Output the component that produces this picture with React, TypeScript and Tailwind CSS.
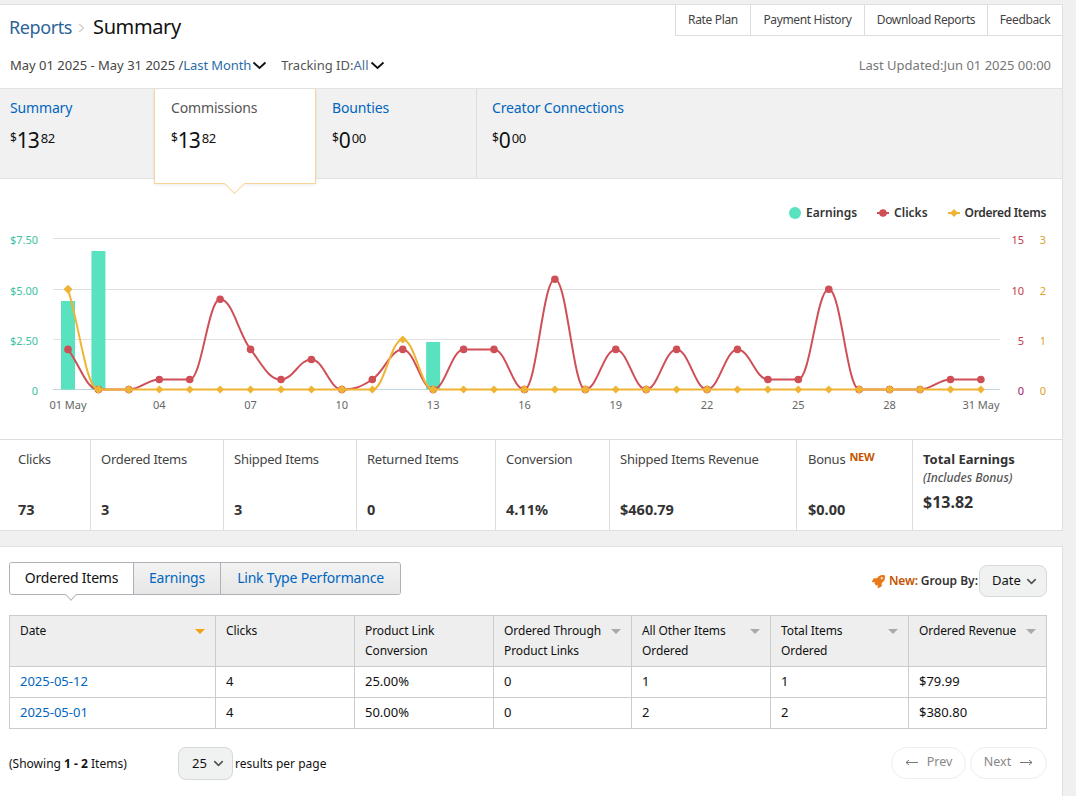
import { ChevronDown } from "lucide-react";
import { FaRocket } from "react-icons/fa";

const clicks = [4, 0, 0, 1, 1, 9, 4, 1, 3, 0, 1, 4, 0, 4, 4, 0, 11, 0, 4, 0, 4, 0, 4, 1, 1, 10, 0, 0, 0, 1, 1];
const ordered = clicks.map((_, i) => (i === 0 ? 2 : i === 11 ? 1 : 0));
const earnings = [
  { day: 0, top: 301 },
  { day: 1, top: 251 },
  { day: 12, top: 342 },
];

const X0 = 68;
const STEP = 30.43;
const BASE = 389.5;
const xAt = (i: number) => X0 + i * STEP;

// highcharts spline: control arms shifted onto the neighbours' slope, then clamped
function spline(pts: number[][]) {
  const cont = (i: number) => {
    const [x, y] = pts[i];
    const [lastX, lastY] = pts[i - 1] || pts[i];
    const [nextX, nextY] = pts[i + 1] || pts[i];
    const lcx = (1.5 * x + lastX) / 2.5;
    let lcy = (1.5 * y + lastY) / 2.5;
    const rcx = (1.5 * x + nextX) / 2.5;
    let rcy = (1.5 * y + nextY) / 2.5;
    if (pts[i - 1] && pts[i + 1]) {
      const correction = ((rcy - lcy) * (rcx - x)) / (rcx - lcx);
      rcy = y + correction;
      lcy = y - correction;
      if (lcy > lastY && lcy > y) {
        lcy = Math.max(lastY, y);
        rcy = 2 * y - lcy;
      } else if (lcy < lastY && lcy < y) {
        lcy = Math.min(lastY, y);
        rcy = 2 * y - lcy;
      }
      if (rcy > nextY && rcy > y) {
        rcy = Math.max(nextY, y);
        lcy = 2 * y - rcy;
      } else if (rcy < nextY && rcy < y) {
        rcy = Math.min(nextY, y);
        lcy = 2 * y - rcy;
      }
    }
    return { lcx, lcy, rcx, rcy };
  };
  let d = `M${pts[0][0]} ${pts[0][1]}`;
  for (let i = 1; i < pts.length; i++) {
    const a = cont(i - 1);
    const b = cont(i);
    d += ` C${a.rcx} ${a.rcy} ${b.lcx} ${b.lcy} ${pts[i][0]} ${pts[i][1]}`;
  }
  return d;
}

const clickPts = clicks.map((v, i) => [xAt(i), BASE - v * 10.02]);
const orderedPts = ordered.map((v, i) => [xAt(i), BASE - v * 50.1]);

function Diamond({ cx, cy, r = 4.5 }: { cx: number; cy: number; r?: number }) {
  return <path d={`M${cx} ${cy - r}L${cx + r} ${cy}L${cx} ${cy + r}L${cx - r} ${cy}Z`} fill="#f0b434" />;
}

function Chart() {
  const axis = [
    { y: 238.5, a: "$7.50", b: "15", c: "3" },
    { y: 289.5, a: "$5.00", b: "10", c: "2" },
    { y: 339.5, a: "$2.50", b: "5", c: "1" },
    { y: 389.5, a: "0", b: "0", c: "0" },
  ];
  return (
    <svg width="1062" height="214" viewBox="0 225 1062 214" className="block" fontSize="11">
      {axis.map((t, i) => (
        <g key={t.y}>
          <line x1="53" x2="1000" y1={t.y} y2={t.y} stroke={i === 3 ? "#c0d4e4" : "#e0e0e0"} strokeWidth="1" />
          <text x="38" y={t.y + 5} textAnchor="end" fill="#3cc4a4">{t.a}</text>
          <text x="1024" y={t.y + 5} textAnchor="end" fill={i === 3 ? "#a0206a" : "#c23c48"}>{t.b}</text>
          <text x="1046" y={t.y + 5} textAnchor="end" fill="#e0a030">{t.c}</text>
        </g>
      ))}
      {earnings.map((b) => (
        <rect key={b.day} x={xAt(b.day) - 7} y={b.top} width="14" height={BASE - b.top} fill="#58e2c0" />
      ))}
      <path d={spline(clickPts)} fill="none" stroke="#cf4f57" strokeWidth="2" />
      {clickPts.map(([x, y], i) => (
        <circle key={i} cx={x} cy={y} r="3.8" fill="#cf4f57" />
      ))}
      <path d={spline(orderedPts)} fill="none" stroke="#f0b434" strokeWidth="2" />
      {orderedPts.map(([x, y], i) => (
        <Diamond key={i} cx={x} cy={y} r={clicks[i] === 0 || i === 0 ? 4.5 : 4} />
      ))}
      <g fill="#666666">
        <text x="68" y="409" textAnchor="middle">01 May</text>
        {["04", "07", "10", "13", "16", "19", "22", "25", "28"].map((l, i) => (
          <text key={l} x={xAt(3 + i * 3)} y="409" textAnchor="middle">{l}</text>
        ))}
        <text x="981" y="409" textAnchor="middle">31 May</text>
      </g>
    </svg>
  );
}

function Money({ whole, cents }: { whole: string; cents: string }) {
  return (
    <div className="mt-[7px] flex items-start text-[#111]">
      <span className="mt-[6px] text-[12px] leading-[14px]">$</span>
      <span className="text-[21px] leading-[30px] tracking-[-1px]">{whole}</span>
      <span className="mt-[6px] ml-[2px] text-[13px] leading-[14px] tracking-[-0.5px]">{cents}</span>
    </div>
  );
}

const stats = [
  { w: "w-[91px]", pl: "pl-[18px]", label: "Clicks", value: "73" },
  { w: "w-[133px]", pl: "pl-[10px]", label: "Ordered Items", value: "3" },
  { w: "w-[133px]", pl: "pl-[10px]", label: "Shipped Items", value: "3" },
  { w: "w-[139px]", pl: "pl-[10px]", label: "Returned Items", value: "0" },
  { w: "w-[114px]", pl: "pl-[10px]", label: "Conversion", value: "4.11%" },
  { w: "w-[187px]", pl: "pl-[10px]", label: "Shipped Items Revenue", value: "$460.79" },
  { w: "w-[116px]", pl: "pl-[11px]", label: "Bonus", value: "$0.00", isNew: true },
];

const columns = [
  { w: "w-[206px]", lines: ["Date"], sort: "active" },
  { w: "w-[139px]", lines: ["Clicks"] },
  { w: "w-[139px]", lines: ["Product Link", "Conversion"] },
  { w: "w-[138px]", lines: ["Ordered Through", "Product Links"], sort: "idle" },
  { w: "w-[139px]", lines: ["All Other Items", "Ordered"], sort: "idle" },
  { w: "w-[138px]", lines: ["Total Items", "Ordered"], sort: "idle" },
  { w: "w-[138px]", lines: ["Ordered Revenue"], sort: "idle" },
];

const rows = [
  ["2025-05-12", "4", "25.00%", "0", "1", "1", "$79.99"],
  ["2025-05-01", "4", "50.00%", "0", "2", "2", "$380.80"],
];

export default function App() {
  return (
    <div className="h-[796px] w-[1076px] overflow-hidden bg-[#f0f0f0] pt-[4px] font-['Noto_Sans',sans-serif] text-[#333]">
      <div className="w-[1063px] border-t border-r border-b border-[#e0e0e0] bg-white">
        {/* header */}
        <div className="relative h-[83px]">
          <div className="flex items-center pl-[9px] pt-[7px] leading-[30px]">
            <span className="text-[18px] tracking-[-0.4px] text-[#2a6496]">Reports</span>
            <ChevronRightThin />
            <span className="text-[20px] tracking-[-0.4px] text-[#111]">Summary</span>
          </div>
          <div className="absolute top-0 right-0 flex h-[31px] border-b border-l border-[#dddddd] text-[12px] leading-[30px] tracking-[-0.35px] text-[#444]">
            <span className="w-[75px] border-r border-[#dddddd] text-center">Rate Plan</span>
            <span className="w-[114px] border-r border-[#dddddd] text-center">Payment History</span>
            <span className="w-[123px] border-r border-[#dddddd] text-center">Download Reports</span>
            <span className="w-[74px] text-center">Feedback</span>
          </div>
          <div className="mt-[13px] flex items-center justify-between pr-[11px] pl-[10px] text-[13px] leading-[20px]">
            <div className="flex items-center">
              <span className="text-[#444]">May 01 2025 - May 31 2025 /</span>
              <span className="tracking-[-0.1px] text-[#2a6da8]">Last Month</span>
              <DateChevron />
              <span className="ml-[14px] text-[#555]">Tracking ID:</span>
              <span className="text-[#4a6f96]">All</span>
              <DateChevron />
            </div>
            <span className="text-[#777]">Last Updated:Jun 01 2025 00:00</span>
          </div>
        </div>

        {/* tabs */}
        <div className="flex h-[91px] items-start border-t border-b border-[#e3e3e3] bg-[#f1f1f1] text-[14px] leading-[20px] tracking-[-0.15px]">
          <div className="h-[89px] w-[154px] pt-[9px] pl-[10px]">
            <span className="text-[#0066c0]">Summary</span>
            <Money whole="13" cents="82" />
          </div>
          <div className="relative z-10 h-[95px] w-[162px] border-x border-b border-[#f8d596] bg-white pt-[9px] pl-[16px] shadow-[0_1px_3px_rgba(0,0,0,0.08)]">
            <span className="text-[#555]">Commissions</span>
            <Money whole="13" cents="82" />
            <div className="absolute -bottom-[8px] left-[72px] size-[15px] rotate-45 border-r border-b border-[#f8d596] bg-white" />
          </div>
          <div className="h-[89px] w-[161px] border-r border-[#dddddd] pt-[9px] pl-[16px]">
            <span className="text-[#0066c0]">Bounties</span>
            <Money whole="0" cents="00" />
          </div>
          <div className="h-[89px] flex-1 pt-[9px] pl-[15px]">
            <span className="text-[#0066c0]">Creator Connections</span>
            <Money whole="0" cents="00" />
          </div>
        </div>

        {/* legend + chart */}
        <div className="flex h-[46px] items-end justify-end pr-[16px] pb-[3px] text-[12px] leading-[18px] font-semibold text-[#333]">
          <div className="mr-[20px] flex items-center gap-[5px]">
            <span className="size-[12px] rounded-full bg-[#58e2c0]" />
            Earnings
          </div>
          <div className="mr-[20px] flex items-center gap-[5px]">
            <LegendMark color="#cf4f57" round />
            Clicks
          </div>
          <div className="flex items-center gap-[5px] tracking-[-0.3px]">
            <LegendMark color="#f0b434" />
            Ordered Items
          </div>
        </div>
        <Chart />

        {/* totals */}
        <div className="flex h-[91px] border-t border-[#dddddd] text-[13px] leading-[20px]">
          {stats.map((s) => (
            <div key={s.label} className={`${s.w} ${s.pl} flex flex-col border-r border-[#dddddd] pt-[9px]`}>
              <div className="tracking-[-0.25px] text-[#444]">
                {s.label}
                {s.isNew && <sup className="relative -top-[1px] ml-[4px] align-[2px] text-[11px] font-bold text-[#c45500]">NEW</sup>}
              </div>
              <div className="mt-[30px] text-[14.5px] font-bold text-[#333]">{s.value}</div>
            </div>
          ))}
          <div className="flex-1 pt-[9px] pl-[10px]">
            <div className="font-bold text-[#333]">Total Earnings</div>
            <div className="text-[12px] leading-[18px] font-medium text-[#555] italic">(Includes Bonus)</div>
            <div className="mt-[5px] text-[16px] font-bold text-[#333]">$13.82</div>
          </div>
        </div>
      </div>

      <div className="mt-[15px] h-[260px] w-[1063px] border-t border-r border-[#e0e0e0] bg-white pr-[15px] pl-[9px]">
        <div className="flex items-start justify-between pt-[15px]">
          <div className="flex h-[33px] rounded-[3px] border border-[#adb1b8] text-[14px] leading-[30px] tracking-[-0.2px]">
            <div className="relative w-[123px] rounded-l-[3px] bg-white text-center text-[#111]">
              Ordered Items
              <div className="absolute -bottom-[5px] left-[57px] size-[8px] rotate-45 border-r border-b border-[#bbbbbb] bg-white" />
            </div>
            <div className="w-[87px] border-l border-[#adb1b8] bg-gradient-to-b from-[#f3f3f3] to-[#e6e6e6] text-center text-[#0066c0]">Earnings</div>
            <div className="w-[180px] rounded-r-[3px] border-l border-[#adb1b8] bg-gradient-to-b from-[#f3f3f3] to-[#e6e6e6] text-center text-[#0066c0]">Link Type Performance</div>
          </div>
          <div className="mt-[3px] flex items-center text-[12px] font-semibold">
            <FaRocket size={13} className="mr-[4px] text-[#e8791a]" />
            <span className="mr-[3px] tracking-[-0.2px] text-[#c45500]">New:</span>
            <span className="text-[#333]">Group By:</span>
            <div className="ml-[1px] flex h-[32px] w-[68px] items-center justify-between rounded-[8px] border border-[#d5d9d9] bg-[#f0f2f2] pr-[7px] pl-[12px] text-[13px] font-normal text-[#111]">
              Date
              <ChevronDown size={15} strokeWidth={2.6} className="text-[#555]" />
            </div>
          </div>
        </div>

        <table className="mt-[18px] w-[1037px] table-fixed border-collapse text-[13px] text-[#111]">
          <thead>
            <tr className="h-[51px] bg-[#eeeeee]">
              {columns.map((c) => (
                <th key={c.lines[0]} className={`${c.w} border border-[#cccccc] px-[10px] pt-[5px] pb-[5px] align-top text-left text-[12px] leading-[20px] font-normal tracking-[-0.1px]`}>
                  <div className="relative">
                    {c.lines.map((l) => (
                      <div key={l} className="whitespace-nowrap">{l}</div>
                    ))}
                    {c.sort && (
                      <span
                        className={`absolute top-[8px] right-0 size-0 border-x-[5px] border-t-[5px] border-x-transparent ${
                          c.sort === "active" ? "border-t-[#f0a010]" : "border-t-[#aaaaaa]"
                        }`}
                      />
                    )}
                  </div>
                </th>
              ))}
            </tr>
          </thead>
          <tbody>
            {rows.map((r) => (
              <tr key={r[0]} className="h-[31px]">
                {r.map((v, i) => (
                  <td key={i} className={`border border-[#cccccc] px-[10px] pb-[2px] leading-[20px] ${i === 0 ? "text-[#0066c0]" : ""}`}>
                    {v}
                  </td>
                ))}
              </tr>
            ))}
          </tbody>
        </table>

        <div className="mt-[18px] flex items-center justify-between text-[12px] text-[#111]">
          <div className="flex items-center">
            <span className="w-[169px]">
              (Showing <b>1 - 2</b> Items)
            </span>
            <div className="flex h-[33px] w-[55px] items-center justify-between rounded-[8px] border border-[#d5d9d9] bg-[#f0f2f2] pr-[6px] pl-[13px] text-[13px]">
              25
              <ChevronDown size={15} strokeWidth={2.6} className="text-[#555]" />
            </div>
            <span className="ml-[2px]">results per page</span>
          </div>
          <div className="flex -translate-y-[1px] gap-[4px] text-[12.5px] text-[#888]">
            <div className="flex h-[32px] w-[75px] items-center justify-center gap-[9px] rounded-full border border-[#eeeeee]">
              <PageArrow left />
              Prev
            </div>
            <div className="flex h-[32px] w-[77px] items-center justify-center gap-[9px] rounded-full border border-[#eeeeee]">
              Next
              <PageArrow />
            </div>
          </div>
        </div>
      </div>
    </div>
  );
}

function ChevronRightThin() {
  return (
    <svg width="7" height="10" viewBox="0 0 7 10" className="mr-[8px] ml-[6px] mt-[2px]">
      <path d="M1 1l4.5 4L1 9" fill="none" stroke="#cccccc" strokeWidth="1.2" />
    </svg>
  );
}

function DateChevron() {
  return (
    <svg width="15" height="9" viewBox="0 0 15 9" className="mt-[1px] ml-[1px]">
      <path d="M1.5 1.5l6 5.5 6-5.5" fill="none" stroke="#111111" strokeWidth="1.8" />
    </svg>
  );
}

function PageArrow({ left }: { left?: boolean }) {
  return (
    <svg width="13" height="7" viewBox="0 0 13 7">
      <path d={left ? "M13 3.5H1M4 1L1 3.5 4 6" : "M0 3.5h12M9 1l3 2.5L9 6"} fill="none" stroke="#777777" strokeWidth="1" />
    </svg>
  );
}

function LegendMark({ color, round }: { color: string; round?: boolean }) {
  return (
    <svg width="12" height="10" viewBox="0 0 12 10">
      <line x1="0" x2="12" y1="5" y2="5" stroke={color} strokeWidth="2" />
      {round ? <circle cx="6" cy="5" r="3.8" fill={color} /> : <path d="M6 1l4 4-4 4-4-4z" fill={color} />}
    </svg>
  );
}
